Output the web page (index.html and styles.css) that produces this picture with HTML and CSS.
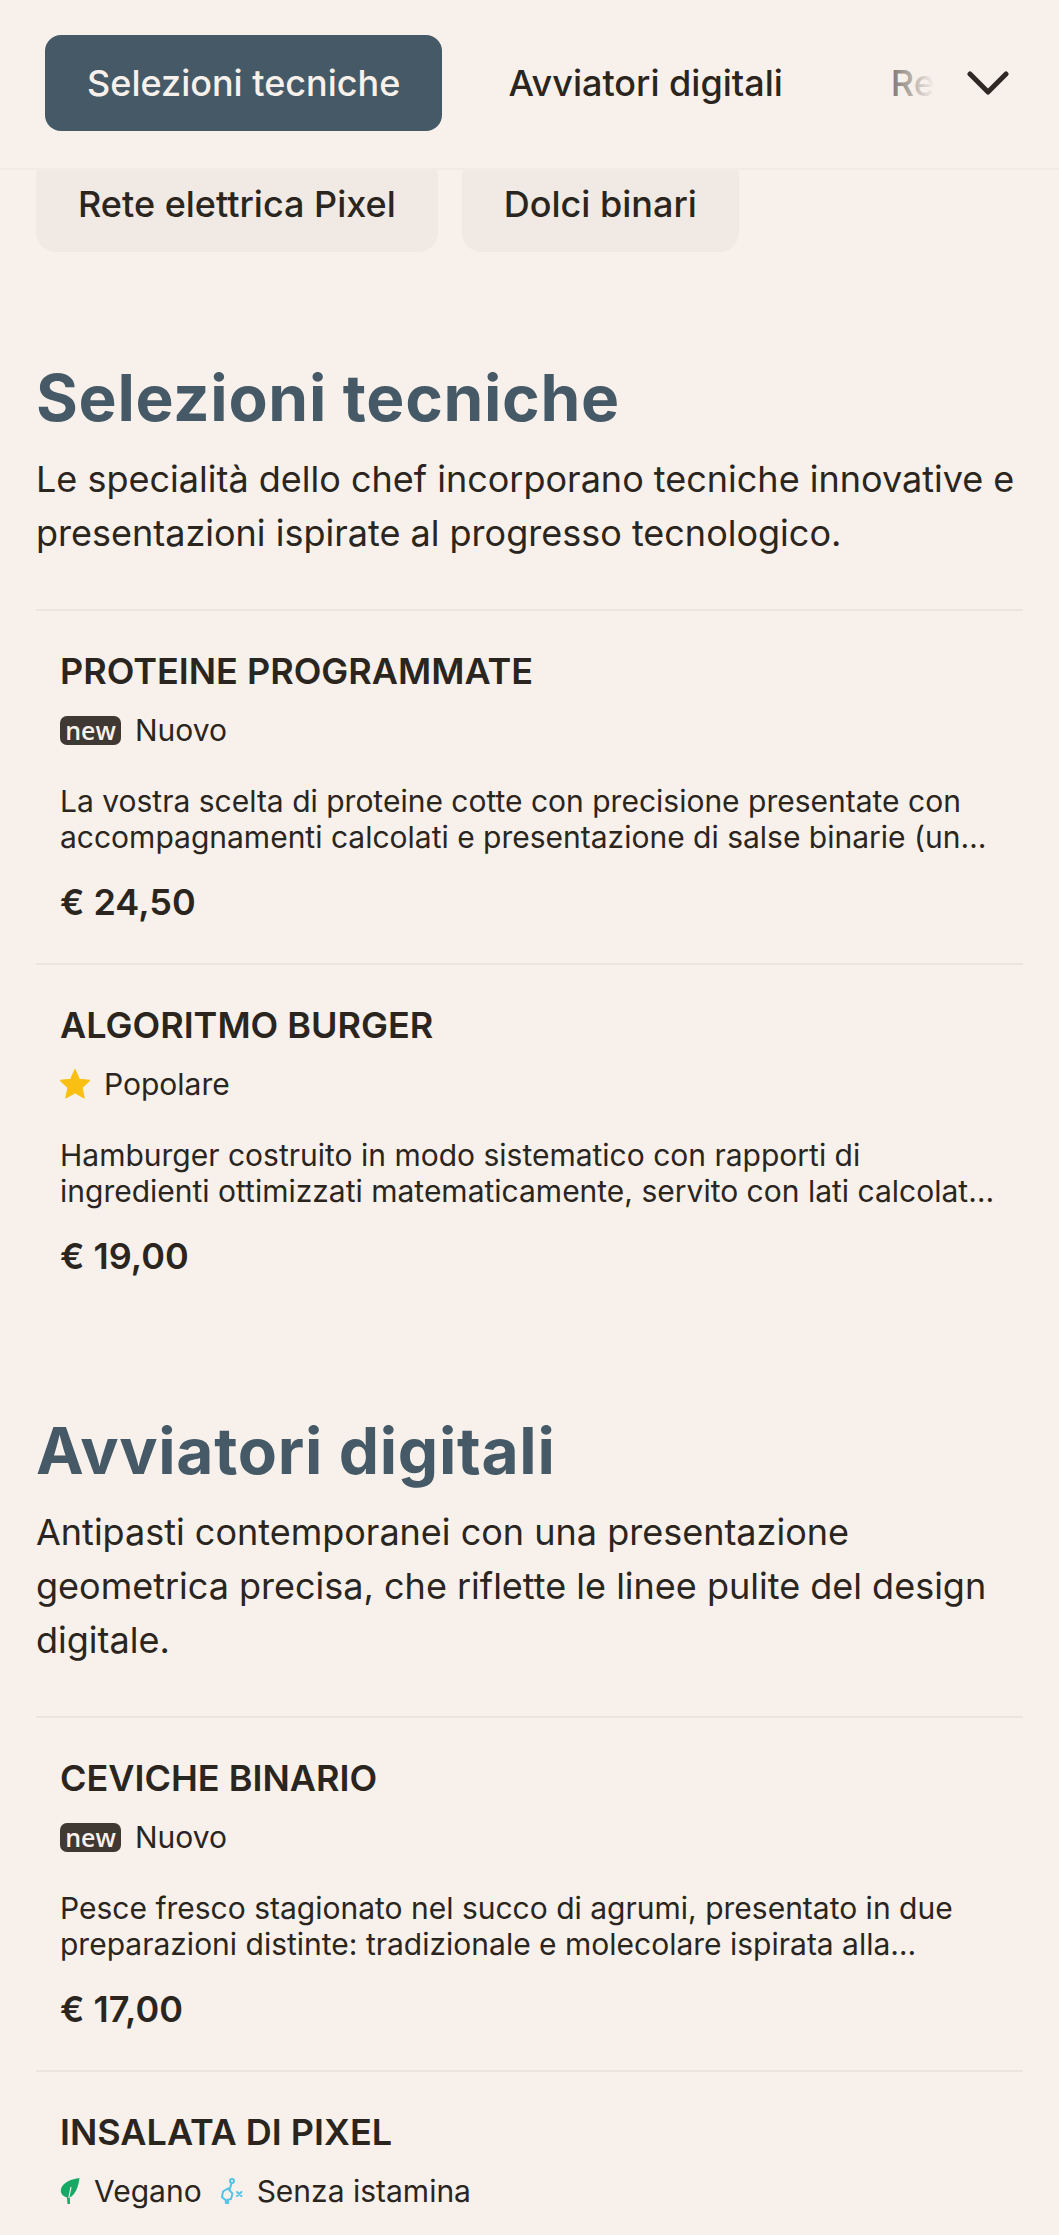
FILE: index.html
```html
<!DOCTYPE html>
<html lang="it">
<head>
  <meta charset="UTF-8" />
  <meta name="viewport" content="width=device-width, initial-scale=1.0"/>
  <title>Menu</title>
  <link rel="stylesheet" href="styles.css">
</head>
<body>

  <div class="tabbar">
    <div class="tabs">
      <a class="tab active" href="#">Selezioni tecniche</a>
      <a class="tab" href="#">Avviatori digitali</a>
      <a class="tab" href="#">Rete elettrica Pixel</a>
    </div>
    <svg class="chevron" viewBox="0 0 42 24" width="42" height="24">
      <path d="M3 3 L21 21 L39 3" fill="none" stroke="#2f2925" stroke-width="5" stroke-linecap="round" stroke-linejoin="round"/>
    </svg>
  </div>

  <div class="content">
    <div class="chips">
      <a class="chip" href="#">Rete elettrica Pixel</a>
      <a class="chip" href="#">Dolci binari</a>
    </div>

    <div class="section">
      <h2>Selezioni tecniche</h2>
      <p class="intro">Le specialità dello chef incorporano tecniche innovative e presentazioni ispirate al progresso tecnologico.</p>
      <div class="items">
        <div class="item">
          <h3>PROTEINE PROGRAMMATE</h3>
          <div class="tags">
            <span class="tag"><span class="badge-new">new</span>Nuovo</span>
          </div>
          <p class="desc">La vostra scelta di proteine cotte con precisione presentate con accompagnamenti calcolati e presentazione di salse binarie (una classica, una sperimentale) per ogni palato curioso.</p>
          <div class="price">€ 24,50</div>
        </div>
        <div class="item">
          <h3>ALGORITMO BURGER</h3>
          <div class="tags">
            <span class="tag">
              <svg class="icon" viewBox="0.5 0.5 29 29" width="30" height="30"><path d="M15 1 L19.2 10.4 L29.4 11.5 L21.8 18.4 L23.9 28.5 L15 23.4 L6.1 28.5 L8.2 18.4 L0.6 11.5 L10.8 10.4 Z" fill="#f9c013" stroke="#f9c013" stroke-linejoin="round"/></svg>
              Popolare
            </span>
          </div>
          <p class="desc">Hamburger costruito in modo sistematico con rapporti di ingredienti ottimizzati matematicamente, servito con lati calcolati al millesimo e una salsa della casa preparata ogni giorno.</p>
          <div class="price">€ 19,00</div>
        </div>
      </div>
    </div>

    <div class="section">
      <h2>Avviatori digitali</h2>
      <p class="intro">Antipasti contemporanei con una presentazione geometrica precisa, che riflette le linee pulite del design digitale.</p>
      <div class="items">
        <div class="item">
          <h3>CEVICHE BINARIO</h3>
          <div class="tags">
            <span class="tag"><span class="badge-new">new</span>Nuovo</span>
          </div>
          <p class="desc">Pesce fresco stagionato nel succo di agrumi, presentato in due preparazioni distinte: tradizionale e molecolare ispirata alla…</p>
          <div class="price">€ 17,00</div>
        </div>
        <div class="item item-cut">
          <h3>INSALATA DI PIXEL</h3>
          <div class="tags">
            <span class="tag">
              <svg class="icon-leaf" viewBox="0 0 20 28" width="20" height="28">
                <path d="M19.5 1 C12 2 3 5 1 12 C0 16 3 19.5 7 20.5 L7.5 27 L10 27 L9.8 20.5 C15 18 18.5 10 19.5 1 Z" fill="#17a866"/>
                <path d="M8.8 21 L11 10" stroke="#f7f0eb" stroke-width="1.2" fill="none"/>
              </svg>
              Vegano
            </span>
            <span class="tag">
              <svg class="icon-mol" viewBox="0 0 23 26" width="23" height="26" fill="none" stroke="#55c3e6" stroke-width="2">
                <circle cx="12" cy="3" r="2"/>
                <path d="M11.5 5 L10 10.5 L8 10.5 L3 13.5 L2 19 L6 22.5 L11 21 L12.5 15.5 L8 10.5"/>
                <circle cx="7" cy="24" r="1.3"/>
                <path d="M17 14 L21.5 18 M21.5 14 L17 18" stroke-linecap="round"/>
              </svg>
              Senza istamina
            </span>
          </div>
        </div>
      </div>
    </div>
  </div>

</body>
</html>
```

FILE: styles.css
```css
* {
  box-sizing: border-box;
}

html, body {
  margin: 0;
  padding: 0;
}

body {
  font-family: "Inter", "Liberation Sans", sans-serif;
  background-color: #f7f0eb;
  color: #2b2520;
}

a {
  color: inherit;
  text-decoration: none;
}

/* sticks over the top of the page, chips scroll under it */
.tabbar {
  position: fixed;
  top: 0;
  left: 0;
  right: 0;
  height: 170px;
  display: flex;
  align-items: center;
  padding: 0 50px 2px 45px;
  background-color: #f8f1eb;
  border-bottom: 2px solid #f2ebe5;
  z-index: 10;
}

.tabs {
  position: relative;
  flex: 1;
  display: flex;
  align-items: center;
  gap: 24px;
  overflow: hidden;
  margin-right: 20px;
}

.tabs::after {
  content: "";
  position: absolute;
  top: 0;
  right: 0;
  bottom: 0;
  width: 60px;
  background: linear-gradient(to right, rgba(248, 241, 235, 0.35), #f8f1eb 80%);
}

.tab {
  flex: none;
  padding: 0 42px;
  height: 96px;
  display: flex;
  align-items: center;
  font-size: 36px;
  font-weight: 500;
  border-radius: 16px;
}

.tab.active {
  background-color: #455a66;
  color: #f8f1eb;
}

.chevron {
  flex: none;
}

.content {
  padding: 157px 36px 0;
}

.chips {
  display: flex;
  gap: 24px;
}

.chip {
  height: 95px;
  padding: 0 42px 2px;
  display: flex;
  align-items: center;
  font-size: 36px;
  font-weight: 500;
  background-color: #f0e9e4;
  border-radius: 20px;
}

.section {
  margin-top: 106px;
}

.section + .section {
  margin-top: 94px;
}

h2 {
  margin: 0;
  font-size: 64px;
  line-height: 80px;
  font-weight: 700;
  letter-spacing: 0.7px;
  color: #455a66;
}

.intro {
  margin: 14px 0 0;
  font-size: 36px;
  line-height: 54px;
}

.items {
  margin-top: 49px;
}

.item {
  padding: 38px 24px 37px;
  border-top: 2px solid #ece5df;
}

.item-cut {
  padding-bottom: 0;
}

.item h3 {
  margin: 0;
  font-size: 36px;
  line-height: 44px;
  font-weight: 600;
}

.tags {
  display: flex;
  gap: 18px;
  margin-top: 17px;
}

.tag {
  display: flex;
  align-items: center;
  gap: 14px;
  font-size: 30px;
  line-height: 40px;
}

.badge-new {
  width: 61px;
  height: 29px;
  display: flex;
  align-items: center;
  justify-content: center;
  background-color: #3f3833;
  color: #f8f1eb;
  font-family: "Open Sans", sans-serif;
  font-size: 25px;
  font-weight: 600;
  border-radius: 7px;
}

.desc {
  margin: 33px 0 0;
  font-size: 30px;
  line-height: 36px;
  display: -webkit-box;
  -webkit-line-clamp: 2;
  -webkit-box-orient: vertical;
  overflow: hidden;
}

.price {
  margin-top: 23px;
  font-size: 36px;
  line-height: 48px;
  font-weight: 600;
}
```
